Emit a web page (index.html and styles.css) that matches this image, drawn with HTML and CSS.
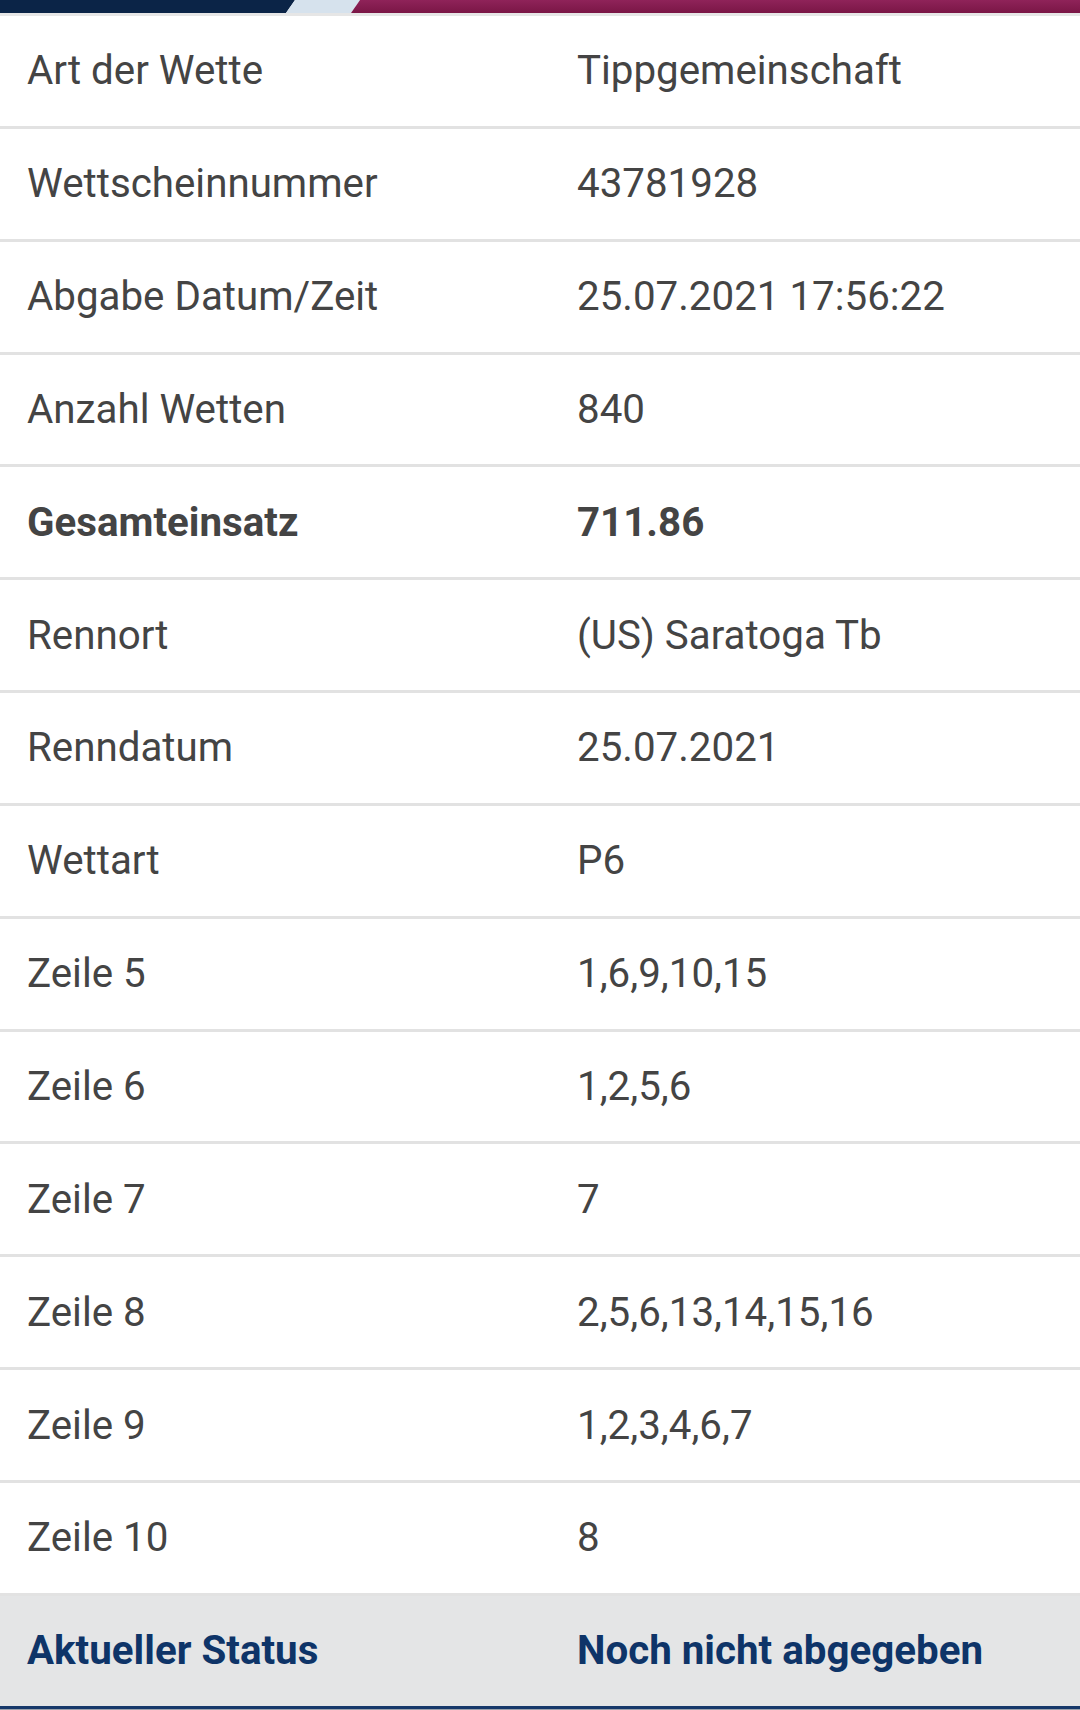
FILE: index.html
```html
<!DOCTYPE html>
<html>
  <head lang="de">
    <meta charset="UTF-8" />
    <title>Wettschein</title>
    <link rel="stylesheet" href="styles.css">
  </head>

  <body>
    <div class="topbar">
      <div class="bar_navy"></div>
      <div class="bar_light"></div>
      <div class="bar_red"></div>
    </div>
    <div id="ticket">
      <div class="row">
        <div class="label">Art der Wette</div>
        <div class="value">Tippgemeinschaft</div>
      </div>
      <div class="row">
        <div class="label">Wettscheinnummer</div>
        <div class="value">43781928</div>
      </div>
      <div class="row">
        <div class="label">Abgabe Datum/Zeit</div>
        <div class="value">25.07.2021 17:56:22</div>
      </div>
      <div class="row">
        <div class="label">Anzahl Wetten</div>
        <div class="value">840</div>
      </div>
      <div class="row bold">
        <div class="label">Gesamteinsatz</div>
        <div class="value">711.86</div>
      </div>
      <div class="row">
        <div class="label">Rennort</div>
        <div class="value">(US) Saratoga Tb</div>
      </div>
      <div class="row">
        <div class="label">Renndatum</div>
        <div class="value">25.07.2021</div>
      </div>
      <div class="row">
        <div class="label">Wettart</div>
        <div class="value">P6</div>
      </div>
      <div class="row">
        <div class="label">Zeile 5</div>
        <div class="value">1,6,9,10,15</div>
      </div>
      <div class="row">
        <div class="label">Zeile 6</div>
        <div class="value">1,2,5,6</div>
      </div>
      <div class="row">
        <div class="label">Zeile 7</div>
        <div class="value">7</div>
      </div>
      <div class="row">
        <div class="label">Zeile 8</div>
        <div class="value">2,5,6,13,14,15,16</div>
      </div>
      <div class="row">
        <div class="label">Zeile 9</div>
        <div class="value">1,2,3,4,6,7</div>
      </div>
      <div class="row">
        <div class="label">Zeile 10</div>
        <div class="value">8</div>
      </div>
      <div class="row status">
        <div class="label">Aktueller Status</div>
        <div class="value">Noch nicht abgegeben</div>
      </div>
    </div>
    <div class="footer"></div>
  </body>
</html>
```

FILE: styles.css
```css
body {
  margin: 0;
  padding: 0;
  background-color: #ffffff;
  font-family: Roboto, "Liberation Sans", sans-serif;
  color: #444444;
}

.topbar {
  display: flex;
  height: 13px;
  overflow: hidden;
  border-bottom: 3px solid #e6e6e6;
}

.topbar .bar_navy {
  width: 295px;
  margin-right: -9px;
  background: #0b2447;
  clip-path: polygon(0 0, 100% 0, calc(100% - 9px) 100%, 0 100%);
}

.topbar .bar_light {
  width: 74px;
  margin-right: -9px;
  background: #d6e2ed;
  clip-path: polygon(9px 0, 100% 0, calc(100% - 9px) 100%, 0 100%);
}

.topbar .bar_red {
  flex: 1;
  background: linear-gradient(#8f2359, #7a1646);
  clip-path: polygon(9px 0, 100% 0, 100% 100%, 0 100%);
}

#ticket .row {
  display: grid;
  grid-template-columns: 577px 1fr;
  align-items: center;
  box-sizing: border-box;
  height: 112.85px;
  border-bottom: 3px solid #e2e2e2;
  font-size: 40.3px;
}

#ticket .label {
  padding-left: 27px;
}

#ticket .bold {
  font-weight: bold;
}

#ticket .status {
  background: #e4e5e6;
  color: #0e3468;
  font-weight: bold;
  border-bottom: 3px solid #16386a;
}

.footer {
  height: 20px;
  background: #9aa1aa;
}
```
